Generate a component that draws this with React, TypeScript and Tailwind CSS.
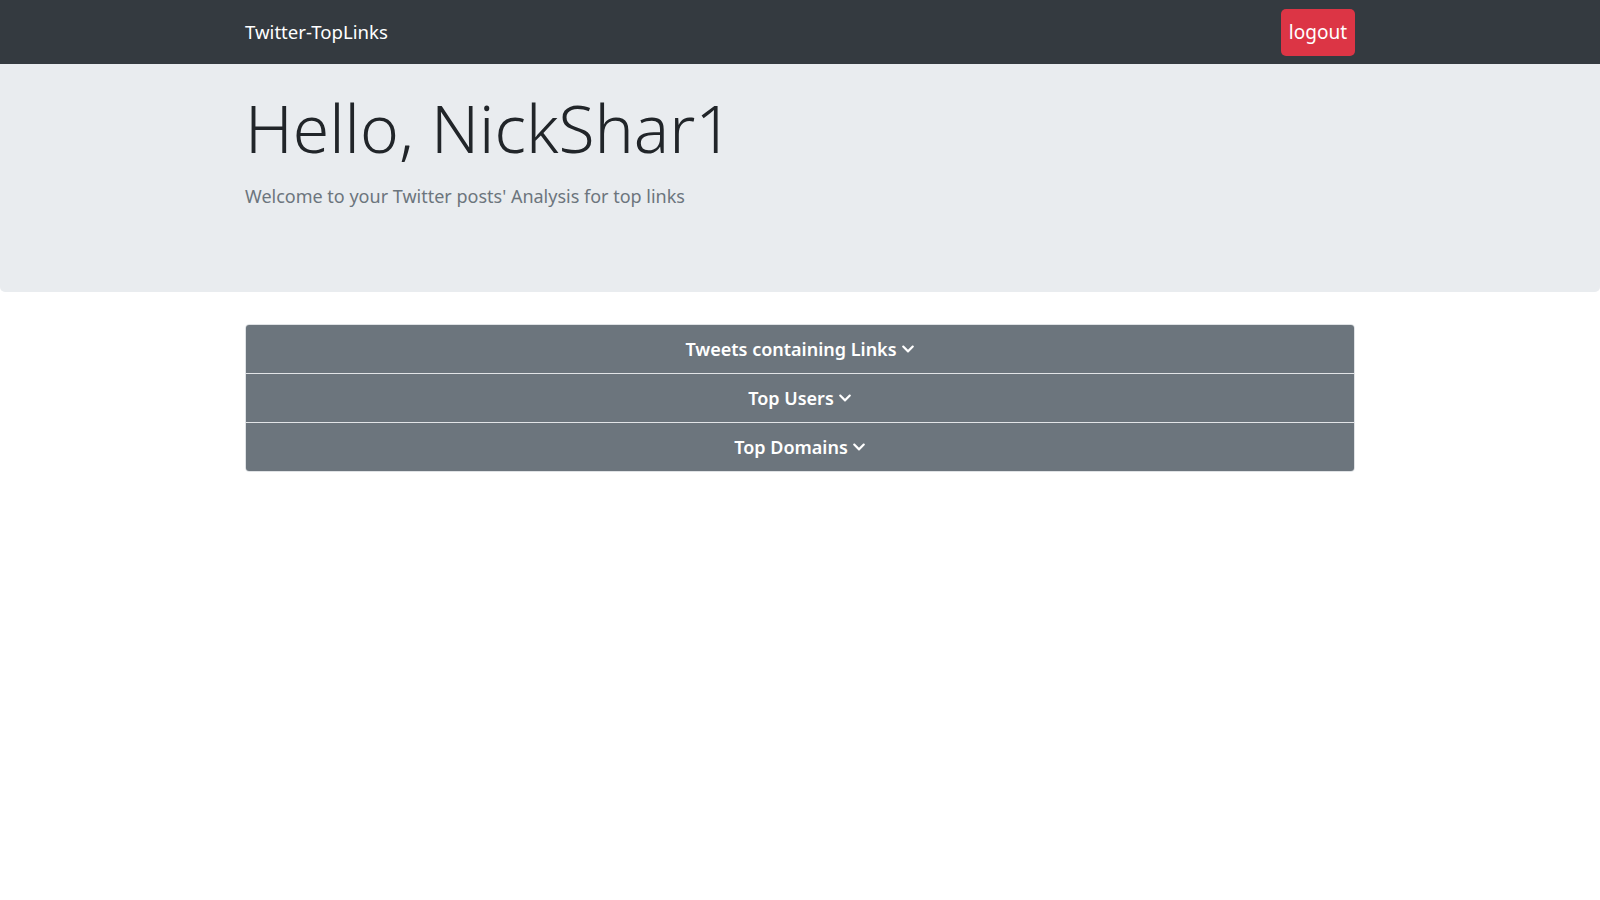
import React, { useState } from 'react';
import { FaChevronDown } from 'react-icons/fa';

const sections = ['Tweets containing Links', 'Top Users', 'Top Domains'];

export default function App() {
  const [open, setOpen] = useState<number | null>(null);

  return (
    <div className="min-h-screen bg-white font-['Noto_Sans',sans-serif]">
      {/* Navbar */}
      <nav className="h-16 bg-[#343a40]">
        <div className="mx-auto flex h-full w-[1110px] items-center justify-between">
          <span className="text-[18.6px] text-white">Twitter-TopLinks</span>
          <button className="h-[47px] rounded-[5px] bg-[#dc3545] px-2 text-[19px] text-white">logout</button>
        </div>
      </nav>

      {/* Jumbotron */}
      <div className="h-[228px] rounded-b-[5px] bg-[#e9ecef]">
        <div className="mx-auto w-[1110px] pt-[24px]">
          <h1 className="text-[66px] font-light leading-[1.2] text-[#212529]">Hello, NickShar1</h1>
          <p className="mt-[16px] text-[18px] text-[#6c757d]">Welcome to your Twitter posts' Analysis for top links</p>
        </div>
      </div>

      {/* Accordion */}
      <div className="mx-auto mt-[32px] w-[1110px] overflow-hidden rounded-[4px] border border-[#dfe2e5]">
        {sections.map((label, idx) => (
          <div key={label} className={idx > 0 ? 'border-t border-[#e2e4e7]' : ''}>
            <button
              onClick={() => setOpen(open === idx ? null : idx)}
              className="flex h-12 w-full items-center justify-center gap-1 bg-[#6c757d] text-[18px] font-semibold text-white"
            >
              <span>{label}</span>
              <FaChevronDown className="h-[14px] w-[14px]" />
            </button>
          </div>
        ))}
      </div>
    </div>
  );
}
